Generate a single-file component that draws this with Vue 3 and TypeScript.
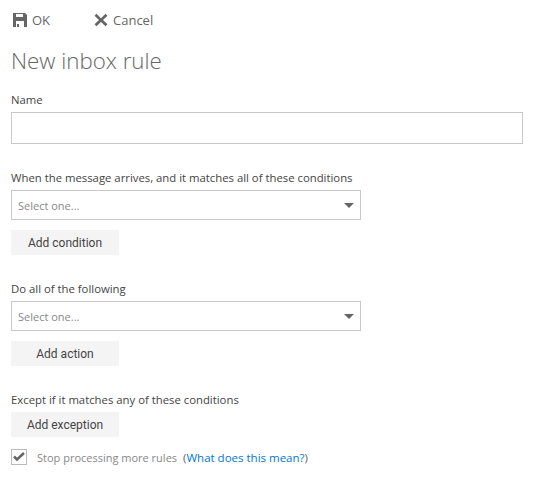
<template>
  <div class="page">
    <div class="toolbar">
      <button class="tool ok">
        <svg width="16" height="16" viewBox="0 0 16 16"><path fill="#666" fill-rule="evenodd" d="M2 1h12l2 2v12H2zM5 2v3h7V2zM5 9v6h8V9zM6 12h2v3H6z"/></svg>
        <span>OK</span>
      </button>
      <button class="tool">
        <svg width="14" height="14" viewBox="0 0 14 14"><path fill="#666" d="M2.500.8 7 5.200 11.500.8l2 2L9 7l4.500 4.300-2 2L7 8.900 2.500 13.300l-2-2L5 7 .5 2.800z"/></svg>
        <span>Cancel</span>
      </button>
    </div>
    <h1>New inbox rule</h1>

    <label class="lbl name-lbl">Name</label>
    <input class="text" type="text" />

    <section v-for="s in sections" :key="s.label" class="group">
      <label class="lbl">{{ s.label }}</label>
      <div v-if="s.select" class="select">
        <span>Select one...</span>
        <i class="caret"></i>
      </div>
      <button class="add">{{ s.button }}</button>
    </section>

    <div class="stop">
      <span class="check">
        <svg width="14" height="14" viewBox="0 0 14 14"><path fill="none" stroke="#666" stroke-width="2.500" d="M2 6.500 5 9.500 12 3"/></svg>
      </span>
      <span class="stop-text">Stop processing more rules</span>
      <span class="paren">(<a>What does this mean?</a>)</span>
    </div>
  </div>
</template>

<script setup lang="ts">
type Section = { label: string; button: string; select: boolean }

const sections: Section[] = [
  { label: 'When the message arrives, and it matches all of these conditions', button: 'Add condition', select: true },
  { label: 'Do all of the following', button: 'Add action', select: true },
  { label: 'Except if it matches any of these conditions', button: 'Add exception', select: false },
]
</script>

<style>
html, body { background: #fff; }
</style>

<style scoped>
.page { width: 533px; height: 480px; overflow: hidden; box-sizing: border-box; padding: 11px 10px 0 11px; font-family: "Open Sans", "Noto Sans", sans-serif; color: #333; }
.toolbar { display: flex; align-items: center; height: 18px; }
.tool { display: flex; align-items: center; gap: 5px; padding: 0; border: 0; background: none; font: inherit; font-size: 13px; color: #666; }
.ok { width: 83px; }
h1 { margin: 14px 0 0; font-size: 22.300px; line-height: 36px; font-weight: 300; color: #666; }
.lbl { display: block; font-size: 11.330px; line-height: 16px; color: #444; }
.name-lbl { margin-top: 13px; }
.text { display: block; width: 512px; height: 32px; margin-top: 4px; box-sizing: border-box; border: 1px solid #c8c8c8; outline: 0; }
.group { margin-top: 26px; }
.select { display: flex; align-items: center; justify-content: space-between; width: 350px; height: 30px; margin-top: 4px; padding: 0 6px; box-sizing: border-box; border: 1px solid #c8c8c8; font-size: 11px; color: #888; }
.caret { width: 0; height: 0; border-left: 5.500px solid transparent; border-right: 5.500px solid transparent; border-top: 5.500px solid #666; }
.add { display: block; width: 108px; height: 25px; margin-top: 10px; padding: 0; border: 0; background: #f4f4f4; font-family: Roboto, sans-serif; font-size: 12px; color: #444; }
.group:nth-of-type(3) .add { margin-top: 4px; }
.stop { display: flex; align-items: center; margin-top: 12px; font-size: 11px; }
.check { display: flex; align-items: center; justify-content: center; width: 16px; height: 16px; box-sizing: border-box; border: 1px solid #bbb; }
.stop-text { margin-left: 10px; color: #888; }
.paren { margin-left: 6px; color: #666; font-size: 11.500px; }
a { color: #0078d7; }
</style>
